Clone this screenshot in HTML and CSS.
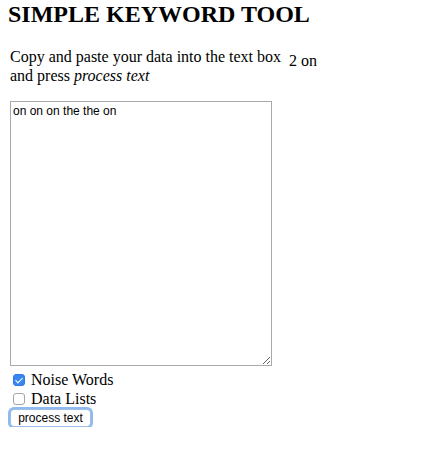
FILE: index.html
```html
<!DOCTYPE html>
<html>
<head>
<meta charset="utf-8">
<link rel="stylesheet" href="styles.css">
</head>
<body>
<h1 class="title">SIMPLE KEYWORD TOOL</h1>
<div class="layout">
  <div class="main">
    <p class="intro">Copy and paste your data into the text box<br>and press <em>process text</em></p>
    <textarea class="data">on on on the the on</textarea>
    <div class="opts">
      <label class="opt"><input type="checkbox" class="cb cb-on" checked><span>Noise Words</span></label>
      <label class="opt"><input type="checkbox" class="cb"><span>Data Lists</span></label>
    </div>
    <button class="btn">process text</button>
  </div>
  <div class="result">2 on</div>
</div>
</body>
</html>
```
FILE: styles.css
```css
html, body {
  margin: 0;
  padding: 0;
  background: #ffffff;
}
body {
  padding: 0 8px;
  font-family: "Liberation Serif", "Times New Roman", serif;
  font-size: 16px;
  color: #000;
}
.title {
  margin: 0;
  font-size: 24px;
  font-weight: bold;
  line-height: 28px;
}
.layout {
  display: flex;
  align-items: flex-start;
  padding-top: 3px;
  padding-left: 2px;
}
.main {
  display: flex;
  flex-direction: column;
  align-items: flex-start;
}
.intro {
  margin: 16px 0 16px;
  line-height: 19px;
}
.intro em {
  font-style: italic;
}
.data {
  box-sizing: border-box;
  width: 262px;
  height: 265px;
  margin: 0;
  padding: 2px 2px;
  border: 1px solid #a9a9a9;
  font-family: "Liberation Sans", Arial, sans-serif;
  font-size: 12px;
  line-height: 14px;
  color: #000;
  resize: vertical;
}
.opts {
  display: flex;
  flex-direction: column;
  margin-top: 4px;
}
.opt {
  display: flex;
  align-items: center;
  height: 19px;
  line-height: 19px;
}
.cb {
  appearance: none;
  -webkit-appearance: none;
  box-sizing: border-box;
  width: 12px;
  height: 12px;
  margin: 0 6px 0 3px;
  border: 1px solid #a5a5a5;
  border-radius: 3px;
  background: #fff;
  position: relative;
}
.cb-on {
  background: #3a86f0;
  border-color: #2f7ae6;
}
.cb-on::after {
  content: "";
  position: absolute;
  left: 3px;
  top: 1px;
  width: 3px;
  height: 6px;
  border: solid #fff;
  border-width: 0 1.5px 1.5px 0;
  transform: rotate(45deg);
}
.btn {
  margin-top: 1px;
  box-sizing: border-box;
  width: 81px;
  height: 18px;
  padding: 0;
  font-family: "Liberation Sans", Arial, sans-serif;
  font-size: 12px;
  color: #000;
  background: #fff;
  border: 1px solid #9fbde6;
  border-radius: 4px;
  box-shadow: 0 0 0 2px #8fbaf0;
}
.result {
  margin-left: 8px;
  padding-top: 20px;
  line-height: 19px;
}
```
